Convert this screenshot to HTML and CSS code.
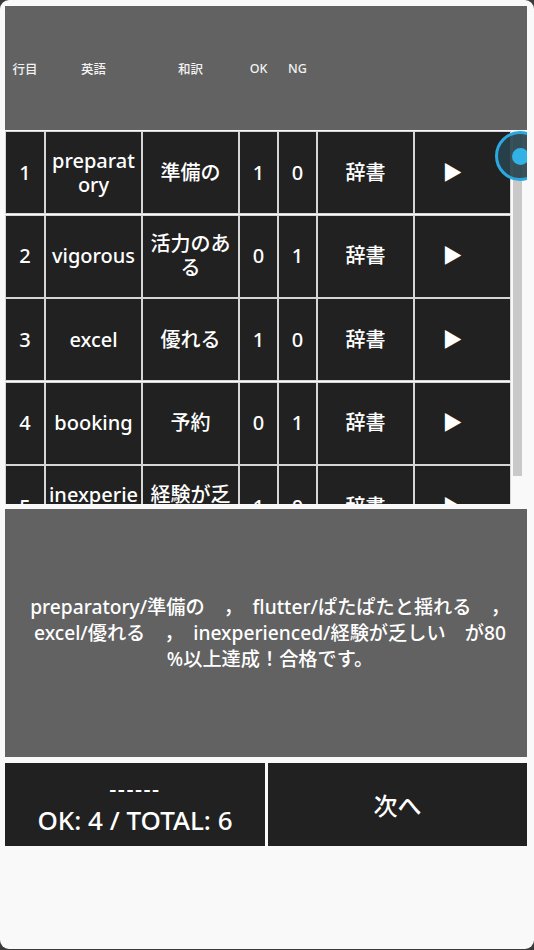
FILE: index.html
```html
<!DOCTYPE html>
<html lang="ja">
<head>
<meta charset="utf-8">
<title>単語テスト結果</title>
<link rel="stylesheet" href="styles.css">
</head>
<body>
<div class="frame">
  <div class="head">
    <div class="hcell">行目</div>
    <div class="hcell">英語</div>
    <div class="hcell">和訳</div>
    <div class="hcell">OK</div>
    <div class="hcell">NG</div>
    <div class="hcell"></div>
    <div class="hcell"></div>
  </div>

  <div class="viewport">
    <div class="rows">
      <div class="cell">1</div><div class="cell">preparatory</div><div class="cell">準備の</div><div class="cell">1</div><div class="cell">0</div><div class="cell">辞書</div><div class="cell play">▶</div>
      <div class="cell">2</div><div class="cell">vigorous</div><div class="cell">活力のある</div><div class="cell">0</div><div class="cell">1</div><div class="cell">辞書</div><div class="cell play">▶</div>
      <div class="cell">3</div><div class="cell">excel</div><div class="cell">優れる</div><div class="cell">1</div><div class="cell">0</div><div class="cell">辞書</div><div class="cell play">▶</div>
      <div class="cell">4</div><div class="cell">booking</div><div class="cell">予約</div><div class="cell">0</div><div class="cell">1</div><div class="cell">辞書</div><div class="cell play">▶</div>
      <div class="cell">5</div><div class="cell">inexperienced</div><div class="cell">経験が乏しい</div><div class="cell">1</div><div class="cell">0</div><div class="cell">辞書</div><div class="cell play">▶</div>
    </div>
    <div class="scrollbar"><div class="thumb"></div></div>
    <div class="handle"><div class="dot"></div></div>
  </div>

  <div class="message">
    <p>preparatory/準備の　，　flutter/ぱたぱたと揺れる　，<br>excel/優れる　，　inexperienced/経験が乏しい　が80<br>%以上達成！合格です。</p>
  </div>

  <div class="actions">
    <div class="btn score"><span class="dash">------</span><span class="total">OK: 4 / TOTAL: 6</span></div>
    <div class="btn next">次へ</div>
  </div>
</div>
</body>
</html>
```

FILE: styles.css
```css
html, body {
  margin: 0;
  padding: 0;
}

body {
  background: #3a3a3a;
  font-family: "Noto Sans", "Noto Sans CJK JP", sans-serif;
  font-weight: 500;
  color: #ffffff;
}

.frame {
  width: 534px;
  height: 949px;
  box-sizing: border-box;
  background: #f9f9f9;
  border-radius: 9px;
  padding: 6px 7px 0 5px;
  display: flex;
  flex-direction: column;
  overflow: hidden;
}

.head {
  height: 124px;
  flex: none;
  background: #626262;
  display: grid;
  grid-template-columns: 38px 95px 95px 37px 37px 95px 95px;
  column-gap: 2px;
  padding-left: 1px;
  align-items: center;
}

.hcell {
  font-size: 12.5px;
  text-align: center;
  color: #f2f2f2;
}

.viewport {
  height: 374px;
  flex: none;
  overflow: hidden;
  position: relative;
  display: flex;
  align-items: flex-start;
}

.rows {
  padding: 2px 0 0 1px;
  display: grid;
  grid-template-columns: 38px 95px 95px 37px 37px 95px 95px;
  grid-auto-rows: 81px;
  column-gap: 2px;
  row-gap: 2.5px;
}

.cell {
  background: #212121;
  outline: 1px solid #d6d6d6;
  display: flex;
  align-items: center;
  justify-content: center;
  text-align: center;
  font-size: 20px;
  line-height: 24px;
  word-break: break-all;
  padding: 0 2px;
}

.play {
  font-size: 20px;
  padding-right: 22px;
  box-sizing: border-box;
}

.scrollbar {
  margin-left: 3px;
  width: 10px;
  height: 374px;
  padding-top: 2px;
  box-sizing: border-box;
}

.thumb {
  width: 9px;
  height: 344px;
  background: #c9c9c9;
}

.handle {
  position: absolute;
  left: 490px;
  top: 1px;
  width: 44px;
  height: 44px;
  border-radius: 50%;
  border: 3px solid #2ba8df;
  background: rgba(40, 66, 76, 0.92);
  display: flex;
  align-items: center;
  justify-content: center;
}

.dot {
  width: 17px;
  height: 17px;
  border-radius: 50%;
  background: #33b2e6;
}

.message {
  margin-top: 5px;
  height: 248px;
  flex: none;
  background: #626262;
  display: flex;
  align-items: center;
  justify-content: center;
  padding-left: 8px;
}

.message p {
  margin: 0;
  font-size: 19.2px;
  line-height: 26px;
  text-align: center;
  color: #ffffff;
}

.actions {
  margin-top: 6px;
  height: 83px;
  flex: none;
  display: grid;
  grid-template-columns: 260px 1fr;
  column-gap: 3px;
}

.btn {
  background: #212121;
  display: flex;
  flex-direction: column;
  align-items: center;
  justify-content: center;
}

.dash {
  font-size: 22px;
  line-height: 30px;
  letter-spacing: 1.5px;
}

.total {
  font-size: 26px;
  line-height: 34px;
}

.next {
  font-size: 24px;
}
```
